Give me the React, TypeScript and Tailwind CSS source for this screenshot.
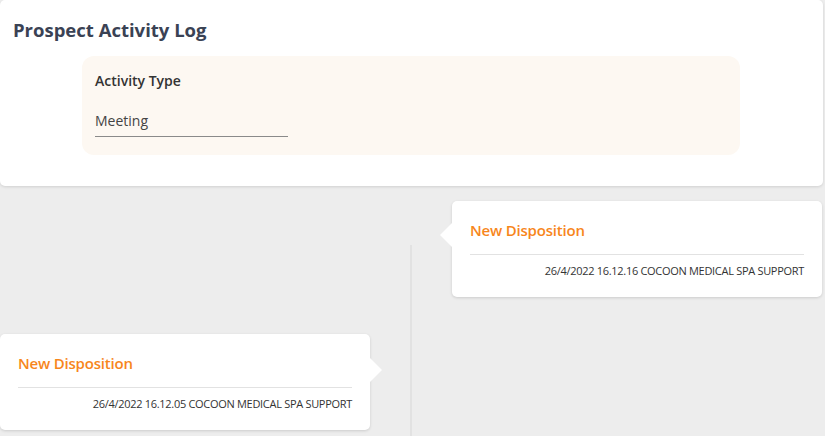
import React from "react";

const font = { fontFamily: '"Open Sans", "Liberation Sans", sans-serif' };

function Card({ date, side }: { date: string; side: "left" | "right" }) {
  return (
    <div className="relative w-[370px] rounded-[5px] bg-white shadow-[0_1px_3px_rgba(0,0,0,0.14)] px-[18px] pt-[18px] pb-[18px]">
      {side === "right" ? (
        <div className="absolute left-[-12px] top-[22px] h-0 w-0 border-y-[12px] border-r-[12px] border-y-transparent border-r-white" />
      ) : (
        <div className="absolute right-[-12px] top-[24px] h-0 w-0 border-y-[12px] border-l-[12px] border-y-transparent border-l-white" />
      )}
      <div className="text-[15px] leading-[22px] font-semibold text-[#f7861c] tracking-[-0.2px]">New Disposition</div>
      <div className="mt-[13px] border-t border-[#e2e2e2]" />
      <div className="mt-[8px] text-right text-[11px] leading-[16px] text-[#333] tracking-[-0.3px]">{date}</div>
    </div>
  );
}

export default function App() {
  return (
    <div className="w-[825px] h-[436px] overflow-hidden bg-[#ededed] flex flex-col" style={font}>
      <div className="w-[823px] bg-white rounded-[5px] shadow-[0_1px_3px_rgba(0,0,0,0.12)] pl-[13px] pt-[18px] pb-[31px]">
        <h1 className="text-[18.5px] leading-[24px] font-bold text-[#3a4254]">Prospect Activity Log</h1>
        <div className="ml-[69px] mt-[14px] w-[658px] rounded-[12px] bg-[#fdf8f2] px-[13px] pt-[15px] pb-[18px]">
          <div className="text-[14px] leading-[20px] font-semibold text-[#333]">Activity Type</div>
          <div className="mt-[20px] w-[193px] border-b border-[#8a8a8a] pb-[5px] text-[14px] leading-[20px] text-[#444]">
            Meeting
          </div>
        </div>
      </div>
      <div className="relative flex-1 pt-[15px]">
        <div className="absolute left-[410px] top-[59px] bottom-0 w-[2px] bg-[#e2e2e2]" />
        <div className="flex justify-end pr-[3px]">
          <Card side="right" date="26/4/2022 16.12.16 COCOON MEDICAL SPA SUPPORT" />
        </div>
        <div className="mt-[37px] flex">
          <Card side="left" date="26/4/2022 16.12.05 COCOON MEDICAL SPA SUPPORT" />
        </div>
      </div>
    </div>
  );
}
